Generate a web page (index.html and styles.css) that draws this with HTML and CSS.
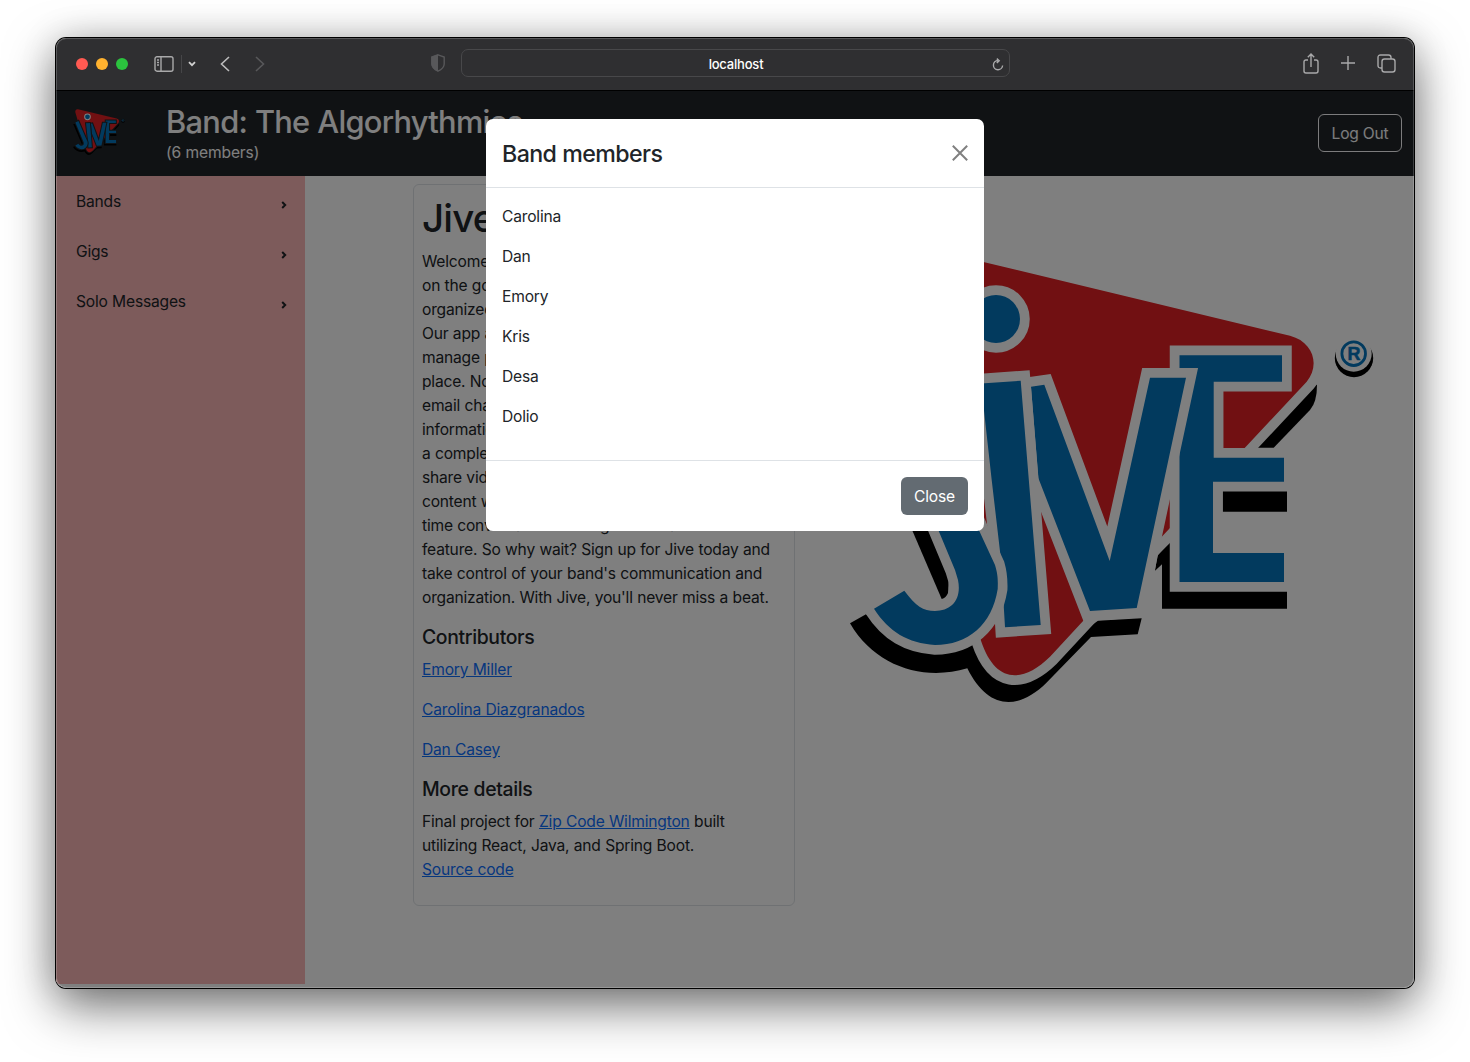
FILE: index.html
```html
<!DOCTYPE html>
<html lang="en">
<head>
<meta charset="utf-8">
<title>Jive</title>
<link rel="stylesheet" href="styles.css">
</head>
<body>
<svg width="0" height="0" class="defs" aria-hidden="true">
  <symbol id="jive-logo" viewBox="850 240 524 463">
    <g class="logo-shadow">
      <path d="M850 623.3L866 614.3L940 640L985 640L1013 680L1098 620.7L1141.700 618.3L1137.700 634.3L1091 637L1046.700 682.500C1018 711 988 710 967.300 668.3C925 681 876 668 850 623.300Z"/>
      <path d="M852 390L880 390L949 575L948 593Q946 598 941.700 599Z"/>
      <path d="M1240 447.700L1306 375L1317 385Q1317 402 1310 410L1273.700 447.700Z"/>
      <path d="M1222.700 491H1287V511.700H1222.700Z"/>
      <path d="M1172 541L1170 591H1287V608.700H1162V564.300L1155 570.700L1157.500 555Z"/>
      <circle cx="1354" cy="358" r="19.200"/>
    </g>
    <path class="logo-red" d="M900 242L1290 335.700C1314 342 1320 366 1306.700 381.700L1084 620L1050 656.700C1022 684 995 683 981 640.700L874 275C870 254 880 238 900 242Z"/>
    <g class="logo-blue">
      <circle class="logo-dot" cx="996" cy="319" r="24"/>
      <path d="M1179.500 355.300H1282V381.700H1213.700V457.700H1284V481.700H1213V553H1284V582H1179.500Z"/>
      <path d="M1031 386.700L1044.300 384.700L1109.700 561L1150 377.700H1186L1136.700 608L1090 611L1038.300 478Z"/>
      <path d="M981 383.500L1020.700 380.700L1040.700 625L1005 627.300L1001 560L991.700 480Z"/>
      <path d="M874 608.700L904.300 590.700C916 606 923 611 935 611C951 611 962 600 958 580L955 570L874 376L905 360L979.300 531L995 565C998 575 998 580 997.700 589C992 625 968 645 935 645C908 643 889 632 874 608.700Z"/>
    </g>
    <circle class="logo-gap" cx="1353.700" cy="353.700" r="18"/>
    <circle class="logo-ring" cx="1353.700" cy="353.700" r="11.800"/>
    <text class="logo-reg" x="1353.900" y="360.300">R</text>
  </symbol>
</svg>

<div class="window">
  <div class="toolbar">
    <div class="toolbar-left">
      <div class="lights"><i class="red"></i><i class="yellow"></i><i class="green"></i></div>
      <svg class="icon sidebar-icon" width="20" height="16" viewBox="0 0 20 16"><rect x="1" y=".8" width="18" height="14.400" rx="2"/><path d="M7 1v14M3 4h2M3 6.500h2M3 9h2"/></svg>
      <span class="divider"></span>
      <svg class="icon chevron" width="8" height="6" viewBox="0 0 8 6"><path d="M1 1.200L4 4.200L7 1.200"/></svg>
      <svg class="icon back" width="10" height="16" viewBox="0 0 10 16"><path d="M9 1L1.500 8L9 15"/></svg>
      <svg class="icon forward" width="10" height="16" viewBox="0 0 10 16"><path d="M1 1L8.500 8L1 15"/></svg>
    </div>
    <div class="toolbar-center">
      <svg class="shield" width="14" height="18" viewBox="0 0 14 18"><path class="shield-line" d="M7 .8L13.200 3V10Q13 14.500 7 17.200Q1 14.500 .8 10V3Z"/><path class="shield-half" d="M7 .5L.5 2.800V10Q.5 14.500 7 17.500Z"/></svg>
      <div class="address"><span>localhost</span>
        <svg class="icon reload" width="12" height="13" viewBox="0 0 12 13"><path d="M6 2.500A4.600 4.600 0 1 0 10.600 7.500M4.800 .6L7.200 2.700L4.800 5"/></svg>
      </div>
    </div>
    <div class="toolbar-right">
      <svg class="icon" width="16" height="21" viewBox="0 0 16 21"><path d="M5 7H3Q1 7 1 9V18Q1 20 3 20H13Q15 20 15 18V9Q15 7 13 7H11M8 14V1.200M4.800 4.200L8 1L11.200 4.200"/></svg>
      <svg class="icon" width="14" height="14" viewBox="0 0 14 14"><path d="M7 0V14M0 7H14"/></svg>
      <svg class="icon" width="19" height="19" viewBox="0 0 19 19"><rect x="5" y="5" width="13" height="13" rx="2.500"/><path d="M5 14H3.500Q1 14 1 11.500V3.500Q1 1 3.500 1H11.500Q14 1 14 3.500V5"/></svg>
    </div>
  </div>

  <div class="page">
    <header class="app-header">
      <svg class="brand" width="52" height="46"><use href="#jive-logo"/></svg>
      <div class="band">
        <h2>Band: The Algorhythmics</h2>
        <p>(6 members)</p>
      </div>
      <button class="logout">Log Out</button>
    </header>
    <div class="columns">
      <nav class="sidebar">
        <a>Bands<svg width="6" height="8" viewBox="0 0 6 8"><path d="M1.200 1L4.200 4L1.200 7"/></svg></a>
        <a>Gigs<svg width="6" height="8" viewBox="0 0 6 8"><path d="M1.200 1L4.200 4L1.200 7"/></svg></a>
        <a>Solo Messages<svg width="6" height="8" viewBox="0 0 6 8"><path d="M1.200 1L4.200 4L1.200 7"/></svg></a>
      </nav>
      <main class="content">
        <section class="card">
          <h1>Jive</h1>
          <p>Welcome to Jive, the app for musicians<br>on the go who want to keep their band<br>organized and on the same page.<br>Our app allows you to create bands and<br>manage practices and gigs all in one<br>place. No more group texts or long<br>email chains that bury the important<br>information. With Jive, each band has<br>a complete calendar and the ability to<br>share videos, music, and other<br>content with band members, or hold real<br>time conversations through our chat room<br>feature. So why wait? Sign up for Jive today and<br>take control of your band's communication and<br>organization. With Jive, you'll never miss a beat.</p>
          <h5>Contributors</h5>
          <p><a>Emory Miller</a></p>
          <p><a>Carolina Diazgranados</a></p>
          <p><a>Dan Casey</a></p>
          <h5>More details</h5>
          <p>Final project for <a>Zip Code Wilmington</a> built<br>utilizing React, Java, and Spring Boot.<br><a>Source code</a></p>
        </section>
        <svg class="hero" width="524" height="463"><use href="#jive-logo"/></svg>
      </main>
    </div>
    <div class="backdrop">
      <div class="modal">
        <div class="modal-header"><h4>Band members</h4>
          <svg width="16" height="16" viewBox="0 0 16 16"><path d="M.8 .8L15.200 15.200M15.200 .8L.8 15.200"/></svg>
        </div>
        <div class="modal-body"><p>Carolina</p><p>Dan</p><p>Emory</p><p>Kris</p><p>Desa</p><p>Dolio</p></div>
        <div class="modal-footer"><button class="close">Close</button></div>
      </div>
    </div>
  </div>
</div>
</body>
</html>
```
FILE: styles.css
```css
* { box-sizing: border-box; }
body {
  margin: 0;
  height: 1062px;
  padding: 38px 56px;
  background: #fff;
  overflow: hidden;
  color: #212529;
  font: 400 15.6px/24px Inter, "Liberation Sans", sans-serif;
  letter-spacing: -0.2px;
  word-spacing: 0.25px;
}
h1, h2, h4, h5, p { margin: 0; }
h1, h2, h4, h5 { font-weight: 500; }
.defs { position: absolute; }

.window {
  position: relative;
  width: 1358px;
  height: 950px;
  border-radius: 10px;
  box-shadow: 0 0 0 1px #000, 0 18px 50px rgba(0,0,0,.55), 0 0 36px rgba(0,0,0,.15);
  overflow: hidden;
}
.window::after {
  content: "";
  position: absolute;
  inset: 0;
  border-radius: 10px;
  box-shadow: inset 0 0 0 1px rgba(255,255,255,.2);
}

.toolbar {
  display: grid;
  grid-template-columns: 374px 580px 1fr;
  align-items: center;
  height: 53px;
  background: #2f2f31;
  border-bottom: 1px solid #000;
}
.icon { fill: none; stroke: #a9a9aa; stroke-width: 1.4; flex: none; }
.toolbar-left { display: flex; align-items: center; padding-left: 20px; }
.lights { display: flex; gap: 8px; margin-right: 26px; }
.lights i { width: 12px; height: 12px; border-radius: 50%; }
.red { background: #ff5a52; }
.yellow { background: #ffb22f; }
.green { background: #2bc33e; }
.divider { width: 1px; height: 18px; background: #464648; margin: 0 6px 0 7px; }
.chevron { stroke: #d0d0d0; stroke-width: 1.8; margin-right: 24px; }
.back { stroke: #bcbcbc; stroke-width: 1.6; margin-right: 25px; }
.forward { stroke: #58585a; stroke-width: 1.6; }
.toolbar-center { display: flex; align-items: center; gap: 16px; padding: 0 0 2px 1px; }
.shield-line { fill: none; stroke: #58585a; stroke-width: 1.4; }
.shield-half { fill: #58585a; }
.address {
  display: grid;
  grid-template-columns: 1fr auto 1fr;
  align-items: center;
  width: 549px;
  height: 28px;
  padding: 0 5px 0 6px;
  border: 1px solid #48484a;
  border-radius: 7px;
  color: #fff;
  font-size: 13px;
  font-weight: 500;
}
.address span { grid-column: 2; padding-top: 2px; }
.reload { justify-self: end; margin-top: 3px; }
.toolbar-right { display: flex; align-items: center; justify-content: flex-end; gap: 22px; padding: 0 18px 2px 0; }

.page { position: relative; height: 897px; background: #fff; }
.app-header { display: flex; height: 85px; background: #212529; padding: 0 12px 0 17px; }
.brand { margin-top: 18px; --logo-gap: #212529; }
.band { flex: 1; padding: 11px 0 0 41px; color: #fff; }
.band h2 { font-size: 30.8px; line-height: 39px; letter-spacing: -0.7px; white-space: nowrap; }
.band p { letter-spacing: -0.15px; }
button { font: inherit; letter-spacing: inherit; height: 38px; border-radius: 6px; }
.logout { margin-top: 23px; width: 84px; padding: 1px 0 0; color: #f8f9fa; background: none; border: 1px solid #f8f9fa; }

.columns { display: flex; height: 812px; }
.sidebar { width: 249px; height: 808px; background: #fab6b6; padding-left: 20px; }
.sidebar a { display: flex; justify-content: space-between; align-items: center; height: 50px; padding: 2px 18px 0 0; }
.sidebar svg { fill: none; stroke: #212529; stroke-width: 2; margin-top: 5px; }
.content { display: flex; align-items: flex-start; padding: 8px 0 0 108px; }
.card { flex: none; width: 382px; height: 722px; padding: 8px; border: 1px solid #dee2e6; border-radius: 6px; white-space: nowrap; }
.card h1 { font-size: 38.5px; line-height: 50px; margin-bottom: 6px; letter-spacing: -0.8px; }
.card p { padding-top: 1px; margin-bottom: 15px; }
.card h5 { font-size: 19.4px; line-height: 24px; margin-bottom: 8px; letter-spacing: -0.35px; }
.card a { color: #0d6efd; text-decoration: underline; }
.hero { flex: none; margin: 56px 0 0 55px; --logo-gap: #fff; }

.logo-red { fill: #e22024; stroke: var(--logo-gap); stroke-width: 19.500; paint-order: stroke; }
.logo-blue > * { fill: #0474bd; stroke: var(--logo-gap); stroke-width: 19.500; paint-order: stroke; stroke-miterlimit: 10; }
.logo-blue > .logo-dot { stroke: #fff; }
.logo-gap { fill: var(--logo-gap); }
.logo-ring { fill: none; stroke: #0474bd; stroke-width: 2.800; }
.logo-reg { fill: #0474bd; stroke: #0474bd; stroke-width: .5; font: 700 18px "Liberation Sans", sans-serif; text-anchor: middle; letter-spacing: 0; }

.backdrop { position: absolute; inset: 0; background: rgba(0,0,0,.5); padding-top: 28px; }
.modal { width: 498px; height: 412px; margin: 0 auto; background: #fff; border-radius: 7px; }
.modal-header { display: flex; justify-content: space-between; align-items: center; height: 69px; padding: 0 16px; border-bottom: 1px solid #dee2e6; }
.modal-header h4 { font-size: 23.2px; letter-spacing: -0.58px; padding-top: 2px; }
.modal-header svg { fill: none; stroke: #808080; stroke-width: 2; }
.modal-body { height: 272px; padding: 17px 16px 15px; }
.modal-body p { margin-bottom: 16px; }
.modal-footer { display: flex; justify-content: flex-end; padding: 16px; border-top: 1px solid #dee2e6; }
.close { width: 67px; padding: 2px 0 0; color: #fff; background: #636b72; border: 0; }
```
